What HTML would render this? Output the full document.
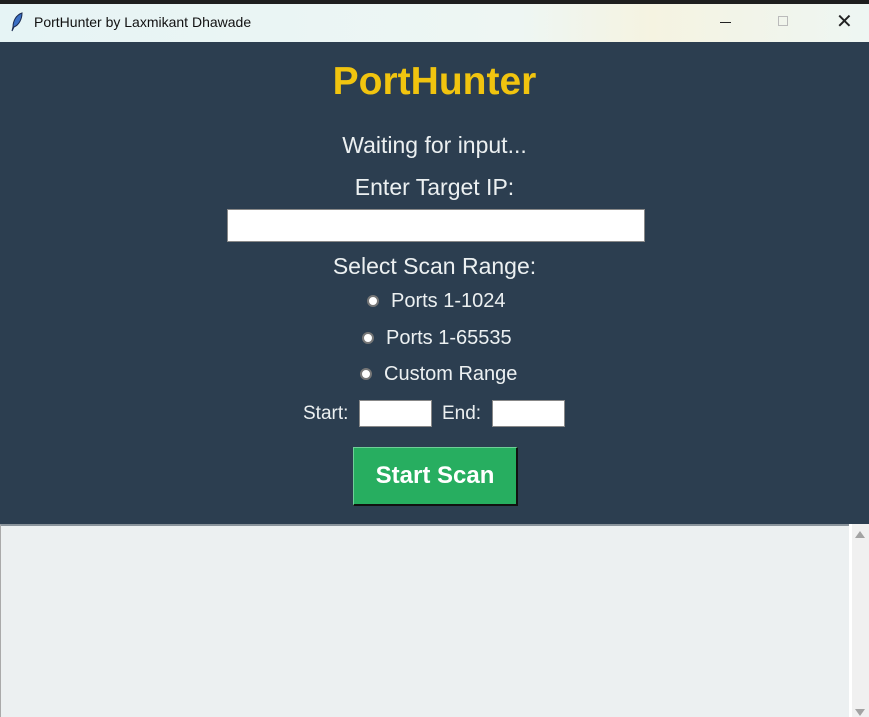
<!DOCTYPE html><html><head><style>
body{margin:0;width:869px;height:717px;overflow:hidden;background:#2c3e50;font-family:"Liberation Sans",Arial,sans-serif;position:relative}
.a{position:absolute}
.t{color:#ecf0f1;font-size:23px;white-space:nowrap;line-height:26px}
.r{position:absolute;width:12px;height:12px;border-radius:50%;background:#fff;border:2px solid #777;box-sizing:border-box}
</style></head><body>
<div class="a" style="left:0;top:0;width:869px;height:4px;background:#1e1e1e"></div>
<div class="a" style="left:0;top:4px;width:869px;height:38px;background:linear-gradient(90deg,#e6f4f5,#eef6f3 60%,#f5f3e1 75%,#eef6f3)"></div>
<svg class="a" style="left:10px;top:12px" width="14" height="20" viewBox="0 0 14 20"><path d="M12 1C6 3 3 9 3 15L2 19L4 15C9 13 12 7 12 1Z" fill="#3b6fc4" stroke="#1a2a50" stroke-width="1"/></svg>
<div class="a" style="left:34px;top:14px;font-size:14px;color:#111">PortHunter by Laxmikant Dhawade</div>
<div class="a" style="left:720px;top:22px;width:11px;height:1px;background:#222"></div>
<div class="a" style="left:778px;top:16px;width:10px;height:10px;border:1px solid #bbb;box-sizing:border-box"></div>
<div class="a" style="left:836px;top:9px;font-size:20px;color:#222">✕</div>
<div class="a" style="left:0;width:869px;top:60px;text-align:center;color:#f1c40f;font-weight:bold;font-size:39px;line-height:44px">PortHunter</div>
<div class="a t" style="left:0;width:869px;top:132px;text-align:center">Waiting for input...</div>
<div class="a t" style="left:0;width:869px;top:174px;text-align:center">Enter Target IP:</div>
<div class="a" style="left:227px;top:209px;width:418px;height:33px;background:#fff;border:1px solid #888;box-sizing:border-box"></div>
<div class="a t" style="left:0;width:869px;top:253px;text-align:center">Select Scan Range:</div>
<div class="r" style="left:367px;top:295px"></div><div class="a t" style="left:391px;top:288px;font-size:20px">Ports 1-1024</div>
<div class="r" style="left:362px;top:332px"></div><div class="a t" style="left:386px;top:325px;font-size:20px">Ports 1-65535</div>
<div class="r" style="left:360px;top:368px"></div><div class="a t" style="left:384px;top:361px;font-size:20px">Custom Range</div>
<div class="a t" style="left:303px;top:401px;font-size:19px">Start:</div>
<div class="a" style="left:359px;top:400px;width:73px;height:27px;background:#fff;border:1px solid #888;box-sizing:border-box"></div>
<div class="a t" style="left:442px;top:401px;font-size:19px">End:</div>
<div class="a" style="left:492px;top:400px;width:73px;height:27px;background:#fff;border:1px solid #888;box-sizing:border-box"></div>
<div class="a" style="left:353px;top:447px;width:165px;height:59px;background:#27ae60;border:1px solid #6fcf97;border-right:2px solid #111;border-bottom:2px solid #111;box-sizing:border-box;color:#fff;font-weight:bold;font-size:24px;text-align:center;line-height:56px">Start Scan</div>
<div class="a" style="left:0;top:524px;width:849px;height:193px;background:#ecf0f1;border-top:2px solid #8a949c;border-left:1px solid #aaa;box-sizing:border-box"></div>
<div class="a" style="left:849px;top:524px;width:3px;height:193px;background:#fff"></div>
<div class="a" style="left:852px;top:524px;width:17px;height:193px;background:#f0f0f0"></div>
<div class="a" style="left:855px;top:531px;border:5px solid transparent;border-bottom:7px solid #a3a3a3;border-top:0"></div>
<div class="a" style="left:855px;top:709px;border:5px solid transparent;border-top:7px solid #a3a3a3;border-bottom:0"></div>
</body></html>
